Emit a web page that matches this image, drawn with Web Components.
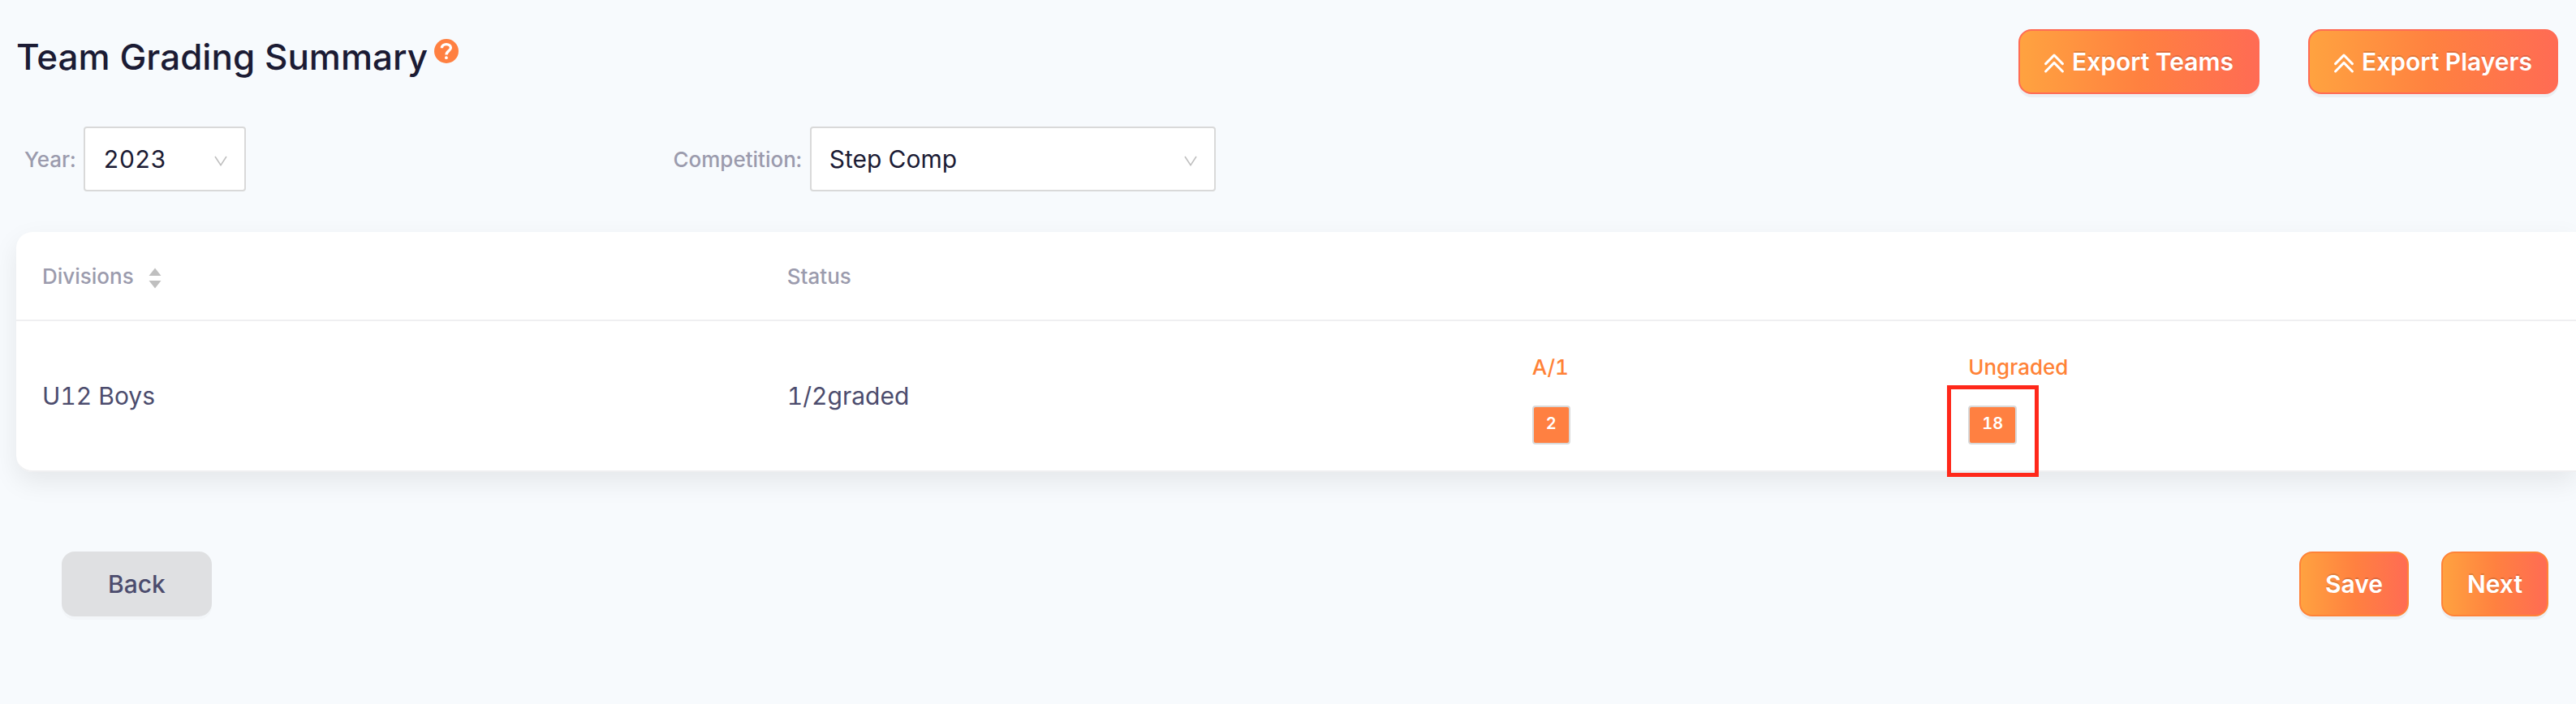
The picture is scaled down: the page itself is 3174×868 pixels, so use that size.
<!DOCTYPE html>
<html lang="en">
<head>
<meta charset="utf-8">
<title>Team Grading Summary</title>
<style>
  html { background: #f7fafd; }
  body { margin: 0; font-family: Inter, "Liberation Sans", sans-serif; font-variant-numeric: tabular-nums; color: #1b1b34; overflow-x: hidden; }
</style>
</head>
<body>
<grading-page></grading-page>

<template id="tpl-page">
  <style>
    :host { display: block; }
    header { display: flex; align-items: flex-start; padding: 36px 22px 0 20px; }
    h1 { margin: 0; font-size: 44px; font-weight: 500; line-height: 68px; }
    help-tip { margin: 12px 0 0 8px; }
    .exports { display: flex; gap: 60px; margin-left: auto; }
    .filters { display: grid; grid-template-columns: minmax(0, 1fr) minmax(0, 3fr); column-gap: 18px; padding: 40px 0 0 30px; }
    grading-table { margin: 50px 0 0 20px; }
    footer { display: flex; gap: 40px; padding: 98px 34px 108px 76px; }
    footer .back { margin-right: auto; }
  </style>
  <header>
    <h1>Team Grading Summary</h1>
    <help-tip></help-tip>
    <div class="exports">
      <app-button kind="export">Export Teams</app-button>
      <app-button kind="export">Export Players</app-button>
    </div>
  </header>
  <section class="filters">
    <filter-select label="Year:" value="2023" width="200"></filter-select>
    <filter-select label="Competition:" value="Step Comp" width="500"></filter-select>
  </section>
  <grading-table></grading-table>
  <footer>
    <app-button kind="cancel" class="back">Back</app-button>
    <app-button kind="primary">Save</app-button>
    <app-button kind="primary">Next</app-button>
  </footer>
</template>

<template id="tpl-help">
  <style>
    :host { display: block; }
    button { display: block; border: 0; padding: 0; background: none; cursor: pointer; }
    svg { display: block; width: 30px; height: 30px; }
  </style>
  <button type="button" aria-label="Help">
    <svg viewBox="0 0 30 30"><circle cx="15" cy="15" r="15" fill="#ff8041"/><path d="M9.4 11.2C9.4 8.2 11.8 6.6 14.9 6.6C18.2 6.6 20.4 8.4 20.4 11C20.4 14.6 15 14.8 15 19.6" fill="none" stroke="#fff" stroke-width="3.3"/><circle cx="14.9" cy="23.2" r="1.9" fill="#fff"/></svg>
  </button>
</template>

<template id="tpl-button">
  <style>
    :host { display: block; }
    button {
      display: flex; align-items: center; box-sizing: border-box; height: 80px; padding: 0 30px;
      border: 2px solid #ff8237; border-radius: 16px;
      background: linear-gradient(90deg, #ffa340, #ff8140 50%, #ff6b54) border-box;
      box-shadow: 0 4px 0 rgba(0, 0, 0, .045);
      color: #fff; font: 600 30px/48px Inter, "Liberation Sans", sans-serif;
      text-shadow: 0 -2px 0 rgba(0, 0, 0, .12); cursor: pointer;
    }
    svg { display: none; width: 24px; height: 28px; margin-right: 10px; }
    :host([kind=export]) button { border-color: #ff6b54; }
    :host([kind=export]) svg { display: block; }
    :host([kind=cancel]) button {
      padding: 0 55px; border-color: #dfe0e2; background: #dfe0e2; color: #4c4c6d;
      font-weight: 500; text-shadow: none; box-shadow: 0 4px 0 rgba(0, 0, 0, .015);
    }
  </style>
  <button type="button">
    <svg viewBox="0 0 24 28" aria-hidden="true" fill="none" stroke="#fff" stroke-width="3" stroke-linecap="round" stroke-linejoin="round"><path d="M1.6 16.6L12 6L22.4 16.6M1.6 26L12 15.4L22.4 26"/></svg>
    <slot></slot>
  </button>
</template>

<template id="tpl-select">
  <style>
    :host { display: flex; align-items: center; gap: 10px; }
    label { color: #9b9bad; font-size: 26px; font-weight: 500; }
    .box { position: relative; }
    select {
      display: block; appearance: none; box-sizing: border-box; width: 100%; height: 80px; margin: 0; padding: 0 24px 0 22px;
      border: 2px solid #d9d9d9; border-radius: 4px; background: #fff; color: #1b1b34;
      font: 400 30px Inter, "Liberation Sans", sans-serif; font-variant-numeric: tabular-nums;
    }
    svg { position: absolute; right: 23px; top: 36px; width: 16px; height: 13px; pointer-events: none; }
  </style>
  <label for="field"></label>
  <div class="box">
    <select id="field"></select>
    <svg viewBox="0 0 16 13" fill="none" stroke="#bfbfbf" stroke-width="1.6" aria-hidden="true"><path d="M1 1L8 11.6L15 1"/></svg>
  </div>
</template>

<template id="tpl-table">
  <style>
    :host { display: block; background: #fff; border-radius: 20px 0 0 20px; box-shadow: 0 12px 32px rgba(0, 0, 0, .08); }
    table { width: 100%; table-layout: fixed; border-collapse: separate; border-spacing: 0; text-align: left; }
    .name, .status { width: 29.1%; }
    th, td { box-sizing: border-box; padding: 0 32px; border-bottom: 2px solid #efeff1; vertical-align: middle; }
    th { height: 110px; color: #9b9bad; font-size: 26px; font-weight: 500; }
    td { color: #4c4c6d; font-size: 30px; }
    tbody td { height: 186px; }
    tbody td:first-child { border-bottom-left-radius: 20px; }
    .sort { display: flex; align-items: center; gap: 18px; border: 0; padding: 0; background: none; color: inherit; font: inherit; }
    .sort svg { width: 16px; height: 26px; margin-top: 6px; }
    .grades { display: grid; grid-template-columns: minmax(0, 3fr) minmax(0, 4fr); }
  </style>
  <table>
    <colgroup><col class="name"><col class="status"><col></colgroup>
    <thead>
      <tr>
        <th scope="col"><button class="sort" type="button">Divisions
          <svg viewBox="0 0 16 26" fill="#bfbfbf" aria-hidden="true"><path d="M8 0.5L15.5 10H0.5ZM0.5 16H15.5L8 25.5Z"/></svg></button></th>
        <th scope="col">Status</th>
        <td></td>
      </tr>
    </thead>
    <tbody>
      <tr>
        <td>U12 Boys</td>
        <td>1/2graded</td>
        <td><div class="grades">
          <grade-count count="2">A/1</grade-count>
          <grade-count count="18" marked>Ungraded</grade-count>
        </div></td>
      </tr>
    </tbody>
  </table>
</template>

<template id="tpl-grade">
  <style>
    :host { display: flex; flex-direction: column; align-items: flex-start; gap: 22px; color: #ff8237; font-size: 26px; font-weight: 500; line-height: 50px; }
    .tag {
      position: relative; box-sizing: border-box; height: 48px; padding: 0 15px; border: 2px solid #d9d9d9; border-radius: 4px;
      background: #ff8041; color: #fff; font-size: 20px; font-weight: 600; line-height: 40px;
    }
    .mark { display: none; position: absolute; inset: -27px -29px -42px -28px; border: 5px solid #ff281a; }
    :host([marked]) .mark { display: block; }
  </style>
  <slot></slot>
  <span class="tag"><span class="count"></span><span class="mark"></span></span>
</template>

<script>
  class TemplateElement extends HTMLElement {
    constructor() {
      super();
      const template = document.getElementById(this.constructor.template);
      this.attachShadow({ mode: "open" }).append(template.content.cloneNode(true));
    }
  }

  class HelpTip extends TemplateElement { static template = "tpl-help"; }
  class AppButton extends TemplateElement { static template = "tpl-button"; }
  class GradingTable extends TemplateElement { static template = "tpl-table"; }
  class GradingPage extends TemplateElement { static template = "tpl-page"; }

  class FilterSelect extends TemplateElement {
    static template = "tpl-select";
    connectedCallback() {
      this.shadowRoot.querySelector("label").textContent = this.getAttribute("label");
      this.shadowRoot.querySelector("select").replaceChildren(new Option(this.getAttribute("value")));
      this.shadowRoot.querySelector(".box").style.width = this.getAttribute("width") + "px";
    }
  }

  class GradeCount extends TemplateElement {
    static template = "tpl-grade";
    connectedCallback() {
      this.shadowRoot.querySelector(".count").textContent = this.getAttribute("count");
    }
  }

  customElements.define("help-tip", HelpTip);
  customElements.define("app-button", AppButton);
  customElements.define("filter-select", FilterSelect);
  customElements.define("grade-count", GradeCount);
  customElements.define("grading-table", GradingTable);
  customElements.define("grading-page", GradingPage);
</script>
</body>
</html>
